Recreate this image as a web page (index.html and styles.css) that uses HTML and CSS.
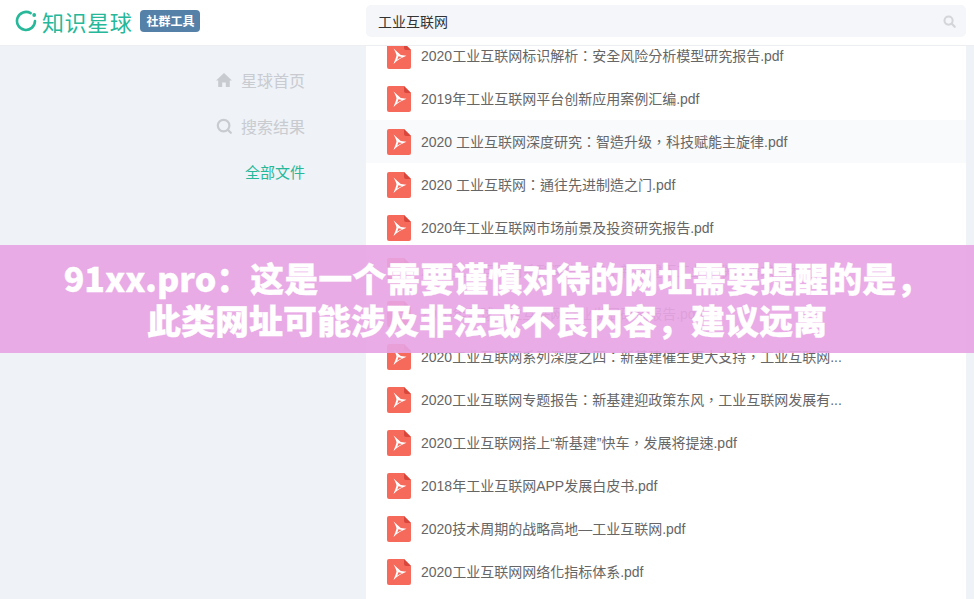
FILE: index.html
```html
<!DOCTYPE html>
<html lang="zh-CN">
<head>
<meta charset="utf-8">
<title>知识星球</title>
<link rel="stylesheet" href="styles.css">
</head>
<body>
<svg class="defs" width="0" height="0" aria-hidden="true">
  <symbol id="pdf" viewBox="0 0 24 26">
    <path d="M2 0H17L24 7V24a2 2 0 0 1-2 2H2a2 2 0 0 1-2-2V2a2 2 0 0 1 2-2Z" fill="#f56a5b"/>
    <path d="M17 0L24 7H19a2 2 0 0 1-2-2Z" fill="#d9473c"/>
    <path d="M6.5 5.5C9.5 8 11.5 10 13.8 12L19.5 12.8C15 14.6 11 16.4 6.5 21C8.2 16.5 9.2 13.8 9.5 12.4C9.2 10.5 8 8 6.5 5.5ZM11.4 13.2C11.1 14.4 10.6 15.7 10.2 16.7C11.8 15.6 13.2 14.8 15 14Z" fill="#fff" fill-rule="evenodd"/>
  </symbol>
</svg>
<header class="topbar">
  <div class="brand">
    <svg class="logo" viewBox="0 0 22 22" width="22" height="22" aria-hidden="true">
      <path d="M15.6 3.2A9 9 0 1 0 20 11" fill="none" stroke="#26b899" stroke-width="2.6" stroke-linecap="round"/>
      <circle cx="19.2" cy="5" r="1.9" fill="#26b899"/>
    </svg>
    <span class="brand-name">知识星球</span>
    <span class="badge">社群工具</span>
  </div>
  <div class="search">
    <span class="search-text">工业互联网</span>
    <svg class="search-icon" viewBox="0 0 14 14" width="13" height="13" aria-hidden="true">
      <circle cx="6" cy="6" r="4.4" fill="none" stroke="#d3d5d9" stroke-width="2.2"/>
      <path d="M9.5 9.5L12.6 12.6" stroke="#d3d5d9" stroke-width="2.4" stroke-linecap="round"/>
    </svg>
  </div>
</header>
<div class="layout">
  <nav class="side">
    <a class="side-item">
      <svg viewBox="0 0 16 16" width="16" height="16" aria-hidden="true"><path d="M8 1L16 8.6H13.8V15H9.8V10.4H6.2V15H2.2V8.6H0Z" fill="#c8cbd0"/></svg>
      <span>星球首页</span>
    </a>
    <a class="side-item">
      <svg viewBox="0 0 16 16" width="16" height="16" aria-hidden="true"><circle cx="7.6" cy="7.6" r="5.8" fill="none" stroke="#c8cbd0" stroke-width="2.2"/><path d="M11.8 11.8L14.8 14.8" stroke="#c8cbd0" stroke-width="2.2" stroke-linecap="round"/></svg>
      <span>搜索结果</span>
    </a>
    <a class="side-item side-active"><span>全部文件</span></a>
  </nav>
  <main class="files">
    <ul class="list" lang="zh-TW">
      <li class="row"><svg class="pdf"><use href="#pdf"/></svg><span>2020工业互联网标识解析：安全风险分析模型研究报告.pdf</span></li>
      <li class="row"><svg class="pdf"><use href="#pdf"/></svg><span>2019年工业互联网平台创新应用案例汇编.pdf</span></li>
      <li class="row row-hover"><svg class="pdf"><use href="#pdf"/></svg><span>2020 工业互联网深度研究：智造升级，科技赋能主旋律.pdf</span></li>
      <li class="row"><svg class="pdf"><use href="#pdf"/></svg><span>2020 工业互联网：通往先进制造之门.pdf</span></li>
      <li class="row"><svg class="pdf"><use href="#pdf"/></svg><span>2020年工业互联网市场前景及投资研究报告.pdf</span></li>
      <li class="row"><svg class="pdf"><use href="#pdf"/></svg><span>2020工业互联网系列深度之三：新基建下工业互联网需求爆发...</span></li>
      <li class="row"><svg class="pdf"><use href="#pdf"/></svg><span>2020年全球工业互联网行业发展研究报告.pdf</span></li>
      <li class="row"><svg class="pdf"><use href="#pdf"/></svg><span>2020工业互联网系列深度之四：新基建催生更大支持，工业互联网...</span></li>
      <li class="row"><svg class="pdf"><use href="#pdf"/></svg><span>2020工业互联网专题报告：新基建迎政策东风，工业互联网发展有...</span></li>
      <li class="row"><svg class="pdf"><use href="#pdf"/></svg><span>2020工业互联网搭上“新基建”快车，发展将提速.pdf</span></li>
      <li class="row"><svg class="pdf"><use href="#pdf"/></svg><span>2018年工业互联网APP发展白皮书.pdf</span></li>
      <li class="row"><svg class="pdf"><use href="#pdf"/></svg><span>2020技术周期的战略高地—工业互联网.pdf</span></li>
      <li class="row"><svg class="pdf"><use href="#pdf"/></svg><span>2020工业互联网网络化指标体系.pdf</span></li>
    </ul>
  </main>
</div>
<div class="notice"><span class="notice-first">91xx.pro：这是一个需要谨慎对待的网址需要提醒的是，</span><br>此类网址可能涉及非法或不良内容，建议远离</div>
</body>
</html>
```
FILE: styles.css
```css
* { box-sizing: border-box; }
html, body { height: 100%; }
body {
  margin: 0;
  height: 599px;
  overflow: hidden;
  background: #eff2f7;
  font-family: "Noto Sans", "Noto Sans CJK SC", sans-serif;
  position: relative;
}
.defs { position: absolute; }
.topbar {
  height: 46px;
  background: #fff;
  border-bottom: 1px solid #eceef2;
  display: flex;
  align-items: flex-start;
  position: relative;
  z-index: 2;
}
.brand {
  width: 366px;
  height: 42px;
  padding-left: 15px;
  display: flex;
  align-items: center;
  flex: none;
}
.logo { flex: none; }
.brand-name {
  margin-left: 5px;
  font-size: 22px;
  letter-spacing: 0.6px;
  line-height: 30px;
  color: #26b899;
  font-family: "Noto Sans CJK SC", sans-serif;
  font-weight: 400;
}
.badge {
  margin-left: 8px;
  width: 60px;
  height: 22px;
  background: #5580a8;
  color: #fff;
  border-radius: 4px;
  font-size: 12px;
  font-weight: 700;
  line-height: 22px;
  text-align: center;
  font-family: "Noto Sans CJK SC", sans-serif;
}
.search {
  margin-top: 5px;
  width: 600px;
  height: 32px;
  padding: 0 10px 0 12px;
  background: #f4f6f9;
  border-radius: 5px;
  display: flex;
  align-items: center;
  justify-content: space-between;
}
.search-text {
  font-size: 14px;
  color: #333;
  font-family: "Noto Sans CJK SC", sans-serif;
}
.layout {
  display: flex;
  height: 553px;
}
.side {
  width: 366px;
  flex: none;
  padding: 11px 61px 0 0;
  display: flex;
  flex-direction: column;
  align-items: flex-end;
}
.side-item {
  height: 46px;
  display: flex;
  align-items: center;
  gap: 9px;
  font-size: 16px;
  color: #c8cbd0;
  font-family: "Noto Sans CJK SC", sans-serif;
}
.side-active {
  font-size: 15px;
  color: #26b899;
  height: 44px;
}
.files {
  width: 600px;
  flex: none;
  background: #fff;
  overflow: hidden;
}
.list {
  list-style: none;
  margin: -12px 0 0;
  padding: 0;
}
.row {
  height: 43px;
  padding-left: 21px;
  display: flex;
  align-items: center;
  gap: 10px;
  font-family: "Liberation Sans", "Noto Sans CJK TC", sans-serif;
  font-size: 14px;
  line-height: 20px;
  color: #666;
}
.row-hover { background: #f9fafb; }
.pdf { width: 24px; height: 26px; flex: none; }
.notice {
  position: absolute;
  left: 0;
  right: 0;
  top: 245px;
  height: 108px;
  z-index: 3;
  padding-top: 12px;
  background: rgba(231, 165, 228, 0.92);
  color: #fff;
  font-family: "Noto Sans CJK SC", sans-serif;
  font-size: 34px;
  font-weight: 900;
  line-height: 42px;
  text-align: center;
  -webkit-text-stroke: 0.3px #fff;
}
.notice-first { padding-left: 20px; }
```
